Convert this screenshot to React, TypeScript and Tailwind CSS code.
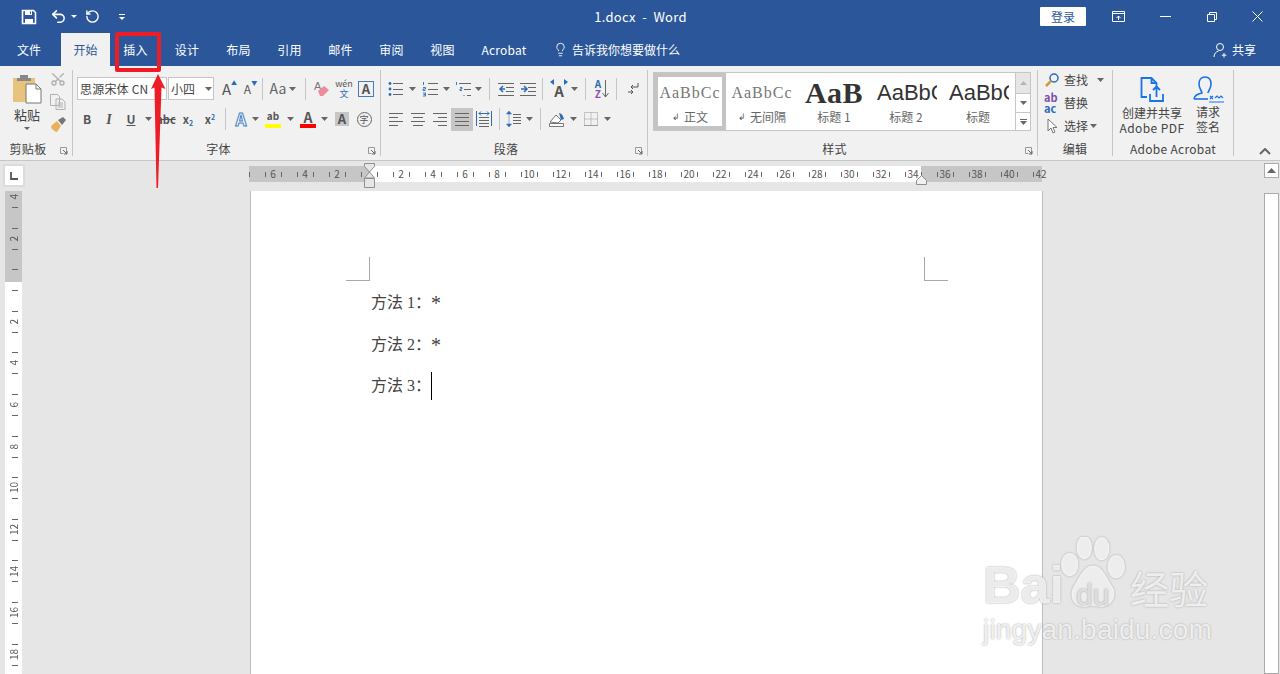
import { type ReactNode } from "react";
import { Lightbulb, RotateCcw, Scissors, Undo2 } from "lucide-react";

const UI_FONT = "font-['Noto_Sans_CJK_SC','Liberation_Sans',sans-serif]";

const TABS = [
  { label: "插入", width: "w-[51px]" },
  { label: "设计", width: "w-[52px]" },
  { label: "布局", width: "w-[51px]" },
  { label: "引用", width: "w-[51px]" },
  { label: "邮件", width: "w-[51px]" },
  { label: "审阅", width: "w-[51px]" },
  { label: "视图", width: "w-[51px]" },
  { label: "Acrobat", width: "w-[72px]" },
];

const H_LABELS = ["6", "4", "2", "", "2", "4", "6", "8", "10", "12", "14", "16", "18", "20", "22", "24", "26", "28", "30", "32", "34", "36", "38", "40", "42"];
const V_LABELS = ["4", "2", "", "2", "4", "6", "8", "10", "12", "14", "16", "18"];

function Icon({ size = 16, box = 16, children, className = "" }: { size?: number; box?: number; children: ReactNode; className?: string }) {
  return (
    <svg width={size} height={size} viewBox={`0 0 ${box} ${box}`} fill="none" className={className}>
      {children}
    </svg>
  );
}

function Caret({ className = "w-[10px]" }: { className?: string }) {
  return (
    <span className={`flex h-[22px] items-center justify-center ${className}`}>
      <svg width="7" height="4" viewBox="0 0 7 4">
        <path d="M0 0h7L3.5 4z" fill="#666" />
      </svg>
    </span>
  );
}

function Sep({ className = "" }: { className?: string }) {
  return <span className={`h-[22px] w-px bg-[#c6c6c6] ${className}`} />;
}

function Btn({ children, className = "w-[22px]" }: { children: ReactNode; className?: string }) {
  return <span className={`flex h-[22px] items-center justify-center ${className}`}>{children}</span>;
}

function RibbonGroup({ label, className, launcher = true, children }: { label: string; className: string; launcher?: boolean; children: ReactNode }) {
  return (
    <section className={`relative my-[4px] flex h-[86px] flex-col border-r border-[#c6c6c6] ${className}`}>
      <div className="h-[72px] min-h-0">{children}</div>
      <div className={`flex h-[14px] items-center justify-center text-[12px] leading-none tracking-[0.3px] text-[#444] ${launcher ? "pr-[16px]" : ""}`}>{label}</div>
      {launcher ? (
        <svg width="8" height="8" viewBox="0 0 8 8" className="absolute right-[4px] bottom-[1px]">
          <path d="M.5 .5h6v6" fill="none" stroke="#999" />
          <path d="M.5 .5v6h3" fill="none" stroke="#999" />
          <path d="M3 3l4 4M7 4v3H4" fill="none" stroke="#666" />
        </svg>
      ) : null}
    </section>
  );
}

function Lines({ x = 0, ys, w = 13, color = "#666" }: { x?: number; ys: number[]; w?: number; color?: string }) {
  return (
    <>
      {ys.map((y) => (
        <path key={y} d={`M${x} ${y}.5h${w}`} stroke={color} />
      ))}
    </>
  );
}

function Bullets() {
  return (
    <Icon>
      <circle cx="2" cy="2.5" r="1.4" fill="#2b6cb5" />
      <circle cx="2" cy="8" r="1.4" fill="#2b6cb5" />
      <circle cx="2" cy="13.5" r="1.4" fill="#2b6cb5" />
      <Lines x={5} ys={[2, 8, 13]} w={10} />
    </Icon>
  );
}

function Numbered() {
  return (
    <Icon>
      <path d="M1.5 1v3M1 6.5h2.5v1.5H1v1.500h2.5M1 12h2.5v3H1M1.500 13.500h2" stroke="#2b6cb5" strokeWidth=".9" />
      <Lines x={6} ys={[2, 8, 13]} w={10} />
    </Icon>
  );
}

function Multilevel() {
  return (
    <Icon>
      <path d="M1.5 1v3M5 6.5h2v1.5H5v1.500h2" stroke="#2b6cb5" strokeWidth=".9" />
      <path d="M9 14v1" stroke="#2b6cb5" />
      <Lines x={4} ys={[2]} w={12} />
      <Lines x={9} ys={[8]} w={7} />
      <Lines x={12} ys={[14]} w={4} />
    </Icon>
  );
}

function Indent({ flip = false }: { flip?: boolean }) {
  return (
    <Icon>
      <Lines x={0} ys={[2, 14]} w={16} />
      <Lines x={8} ys={[6, 10]} w={8} />
      <path d={flip ? "M1 8h5M4 5l3 3-3 3" : "M7 8H2M5 5L2 8l3 3"} stroke="#2b6cb5" strokeWidth="1.5" />
    </Icon>
  );
}

function Align({ kind }: { kind: "left" | "center" | "right" | "justify" }) {
  const rows = {
    left: [[1, 14], [1, 9], [1, 14], [1, 9]],
    center: [[1, 14], [3, 10], [1, 14], [3, 10]],
    right: [[1, 14], [6, 9], [1, 14], [6, 9]],
    justify: [[1, 14], [1, 14], [1, 14], [1, 14]],
  }[kind];
  return (
    <Icon>
      {rows.map(([x, w], i) => (
        <path key={i} d={`M${x} ${2 + i * 4}.5h${w}`} stroke="#666" />
      ))}
    </Icon>
  );
}

function GalleryItem({ sample, label, mark = false, selected = false, left = false }: { sample: ReactNode; label: string; mark?: boolean; selected?: boolean; left?: boolean }) {
  return (
    <div className={`flex h-[57px] w-[72px] flex-col items-center overflow-hidden ${selected ? "border-4 border-[#c4c4c4]" : "border-4 border-white"}`}>
      <div className={`flex h-[32px] w-[62px] items-center overflow-hidden whitespace-nowrap ${left ? "justify-start pl-[2px]" : "justify-center"}`}>{sample}</div>
      <div className="flex items-center text-[12px] leading-[16px] text-[#666]">
        {mark ? <span className="mr-[4px] text-[9px] text-[#555]">↲</span> : null}
        {label}
      </div>
    </div>
  );
}

function TitleBar() {
  return (
    <header className="flex h-[33px] items-center bg-[#2b579a] text-white">
      <div className="ml-[21px] flex w-[110px] items-center">
        <Icon>
          <path d="M1.5 1.5h11l2 2v11h-13z" stroke="#fff" strokeWidth="1.6" />
          <path d="M4 2h7v4H4z" fill="#fff" />
          <path d="M4 10h8v5H4z" fill="#fff" />
          <path d="M9 2.500h1v2.500H9z" fill="#2b579a" />
        </Icon>
        <Undo2 size={17} strokeWidth={2.2} className="ml-[13px]" />
        <svg width="6" height="3" viewBox="0 0 6 3" className="ml-[4px]">
          <path d="M0 0h6L3 3z" fill="#fff" />
        </svg>
        <RotateCcw size={15} strokeWidth={2.2} className="ml-[8px]" />
        <svg width="6" height="6" viewBox="0 0 6 6" className="ml-[19px]">
          <path d="M0 .5h6" stroke="#fff" />
          <path d="M0 3h6L3 6z" fill="#fff" />
        </svg>
      </div>
      <div className="flex-1 pl-[110px] text-center text-[13px] tracking-[0.3px]">1.docx&nbsp; -&nbsp; Word</div>
      <div className="flex h-[19px] w-[46px] items-center justify-center rounded-[1px] bg-white text-[12px] text-[#2b579a]">登录</div>
      <div className="mr-[17px] ml-[26px] flex w-[151px] items-center justify-between">
        <svg width="13" height="11" viewBox="0 0 13 11">
          <path d="M.5 .5h12v10H.5zM.5 2.500h12M6.500 9V5M4.500 7l2-2 2 2" fill="none" stroke="#fff" />
        </svg>
        <svg width="11" height="1" viewBox="0 0 11 1">
          <path d="M0 .5h11" stroke="#fff" />
        </svg>
        <svg width="10" height="10" viewBox="0 0 10 10">
          <path d="M.5 2.500h7v7h-7zM2.500 2.500v-2h7v7h-2" fill="none" stroke="#fff" />
        </svg>
        <svg width="11" height="11" viewBox="0 0 11 11">
          <path d="M.5 .5l10 10M10.500 .5l-10 10" stroke="#fff" />
        </svg>
      </div>
    </header>
  );
}

function TabBar() {
  return (
    <nav className="flex h-[33px] items-stretch bg-[#2b579a] text-[12px] text-white">
      <div className="flex w-[58px] items-center justify-center">文件</div>
      <div className="ml-[3px] flex w-[49px] items-center justify-center bg-[#f1f1f1] text-[#2b579a]">开始</div>
      {TABS.map((tab) => (
        <div key={tab.label} className={`flex items-center justify-center tracking-[0.2px] ${tab.width}`}>
          {tab.label}
        </div>
      ))}
      <div className="ml-[13px] flex items-center">
        <Lightbulb size={15} strokeWidth={1.4} />
        <span className="ml-[4px]">告诉我你想要做什么</span>
      </div>
      <div className="ml-auto mr-[24px] flex items-center">
        <svg width="16" height="16" viewBox="0 0 16 16" fill="none">
          <circle cx="7" cy="5" r="3.500" stroke="#fff" />
          <path d="M1 15c0-3 2-5.500 4.500-6M11 11v4.500M8.800 13.200h4.500" stroke="#fff" />
        </svg>
        <span className="ml-[3px]">共享</span>
      </div>
    </nav>
  );
}

function Clipboard() {
  return (
    <RibbonGroup label="剪贴板" className="w-[73px]">
      <div className="flex h-[70px]">
        <div className="flex w-[54px] flex-col items-center pt-[4px]">
          <svg width="30" height="30" viewBox="0 0 30 30">
            <path d="M1 4h22v24H1z" fill="#e8c37c" />
            <path d="M8 1h8v3h3v3H5V4h3z" fill="#888" />
            <path d="M14 10h10l5 5v14H14z" fill="#fff" stroke="#777" />
            <path d="M24 10v5h5" fill="none" stroke="#777" />
          </svg>
          <span className="text-[13px] leading-[21px] text-[#444]">粘贴</span>
          <svg width="6" height="3" viewBox="0 0 6 3" className="mt-[2px]">
            <path d="M0 0h6L3 3z" fill="#666" />
          </svg>
        </div>
        <div className="-ml-[4px] flex w-[16px] flex-col items-center gap-[7px] pt-px">
          <Scissors size={16} color="#b0b0b0" className="-rotate-90" />
          <svg width="16" height="16" viewBox="0 0 16 16" fill="none" stroke="#b0b0b0">
            <path d="M.5 .5h7l2 2v9h-9zM6 5h6l3 3v7.500H6z" />
            <path d="M8 9h5M8 11h5M8 13h5" />
          </svg>
          <svg width="16" height="16" viewBox="0 0 16 16">
            <path d="M1 9l6-5 4 5-4 6-3-1-1-2-1 1z" fill="#e8b25c" />
            <path d="M8 3l5-3 3 3-4 5z" fill="#777" />
          </svg>
        </div>
      </div>
    </RibbonGroup>
  );
}

function FontGroup() {
  return (
    <RibbonGroup label="字体" className="w-[308px]">
      <div className="mt-[7px] flex h-[23px] items-center pl-[4px]">
        <div className="flex h-[23px] w-[90px] items-center border border-[#c6c6c6] bg-white pl-[2px] text-[12px] tracking-[0.2px] whitespace-nowrap text-[#444]">思源宋体 CN</div>
        <div className="ml-[1px] flex h-[23px] w-[46px] items-center justify-between border border-[#c6c6c6] bg-white pl-[2px] text-[12px] text-[#444]">
          小四
          <Caret />
        </div>
        <Btn className="ml-[2px] w-[21px]">
          <span className="relative text-[15px] leading-none text-[#555]">A<span className="absolute -top-[1px] -right-[6px] text-[6px] text-[#2b6cb5]">▲</span></span>
        </Btn>
        <Btn className="w-[21px]">
          <span className="relative text-[12px] leading-none text-[#555]">A<span className="absolute -top-[3px] -right-[6px] text-[6px] text-[#2b6cb5]">▼</span></span>
        </Btn>
        <Sep className="ml-[4px]" />
        <Btn className="ml-[6px] w-[18px]">
          <span className="text-[14px] text-[#666]">Aa</span>
        </Btn>
        <Caret />
        <Sep className="ml-[8px]" />
        <Btn className="ml-[5px] w-[22px]">
          <svg width="16" height="16" viewBox="0 0 16 16">
            <text x="0" y="9" fontSize="11" fill="#777" fontFamily="Liberation Sans">A</text>
            <path d="M4 10l6-5 5 4-6 6H6z" fill="#ee8b99" />
          </svg>
        </Btn>
        <Btn>
          <span className="flex flex-col items-center text-[9px] leading-[10px] text-[#555]">
            wén
            <span className="text-[#2b6cb5]">文</span>
          </span>
        </Btn>
        <Btn>
          <span className="flex h-[16px] w-[16px] items-center justify-center border border-[#4a79b5] text-[13px] font-bold leading-none text-[#555]">A</span>
        </Btn>
      </div>
      <div className="mt-[7px] flex h-[24px] items-center pl-[3px] text-[#555]">
        <Btn><b className="text-[12px]">B</b></Btn>
        <Btn><i className="font-['Liberation_Serif',serif] text-[14px] font-bold">I</i></Btn>
        <Btn><b className="text-[12px] underline">U</b></Btn>
        <Caret className="ml-px w-[10px]" />
        <Btn className="ml-[2px] w-[22px]"><span className="text-[11px] font-bold line-through">abc</span></Btn>
        <Btn><b className="text-[11px]">x<sub className="text-[7px] text-[#2b6cb5]">2</sub></b></Btn>
        <Btn><b className="text-[11px]">x<sup className="text-[7px] text-[#2b6cb5]">2</sup></b></Btn>
        <Sep className="ml-[4px]" />
        <Btn className="ml-[4px] w-[22px]"><b className="text-[17px] text-white [-webkit-text-stroke:1px_#3f7fc4]">A</b></Btn>
        <Caret className="-ml-[2px] w-[10px]" />
        <Btn className="ml-[2px] w-[22px]">
          <span className="relative flex h-[18px] w-[16px] flex-col items-center text-[10px] leading-[12px] font-bold">
            ab
            <span className="absolute bottom-0 h-[4px] w-[16px] bg-[#ffff00]" />
          </span>
        </Btn>
        <Caret className="ml-px w-[10px]" />
        <Btn className="ml-[2px] w-[22px]">
          <span className="relative flex h-[18px] w-[16px] justify-center text-[14px] leading-[14px] font-bold">
            A
            <span className="absolute bottom-0 h-[4px] w-[16px] bg-[#ff0000]" />
          </span>
        </Btn>
        <Caret />
        <Btn className="ml-[2px] w-[22px]">
          <span className="flex h-[14px] w-[14px] items-center justify-center bg-[#c6c6c6] text-[13px] font-bold">A</span>
        </Btn>
        <Btn>
          <span className="flex h-[15px] w-[15px] items-center justify-center rounded-full border border-[#666] text-[9px] leading-none">字</span>
        </Btn>
      </div>
    </RibbonGroup>
  );
}

function ParagraphGroup() {
  return (
    <RibbonGroup label="段落" className="w-[267px]">
      <div className="mt-[7px] flex h-[23px] items-center pl-[7px]">
        <Btn className="w-[16px]"><Bullets /></Btn>
        <Caret className="w-[16px]" />
        <Btn className="w-[20px]"><Numbered /></Btn>
        <Caret className="w-[12px]" />
        <Btn className="ml-[3px] w-[16px]"><Multilevel /></Btn>
        <Caret className="w-[14px]" />
        <Sep className="ml-[4px]" />
        <Btn className="ml-[8px] w-[16px]"><Indent /></Btn>
        <Btn className="ml-[6px] w-[16px]"><Indent flip /></Btn>
        <Sep className="ml-[6px]" />
        <Btn className="ml-[6px] w-[20px]">
          <span className="relative mt-[3px] text-[15px] font-bold leading-none text-[#555]">
            A
            <svg width="18" height="6" viewBox="0 0 18 6" className="absolute -top-[4px] -left-[4px]">
              <path d="M0 3L4 0v6zM18 3L14 0v6z" fill="#2b6cb5" />
            </svg>
          </span>
        </Btn>
        <Caret className="w-[10px]" />
        <Sep className="ml-[6px]" />
        <Btn className="ml-[7px] w-[18px]">
          <span className="flex flex-col text-[10px] leading-[10px] font-bold">
            <span className="text-[#2b6cb5]">A</span>
            <span className="text-[#8a4fb5]">Z</span>
          </span>
          <svg width="7" height="18" viewBox="0 0 7 18" className="ml-[1px]">
            <path d="M3.500 0v17M.5 13l3 4 3-4" fill="none" stroke="#666" />
          </svg>
        </Btn>
        <Sep className="ml-[5px]" />
        <Btn className="ml-[5px] w-[22px]">
          <svg width="11" height="13" viewBox="0 0 11 13" fill="none">
            <path d="M10 1v4H3M5 3L3 5l2 2" stroke="#555" />
            <path d="M0 10h5M3 8l2 2-2 2" stroke="#555" />
          </svg>
        </Btn>
      </div>
      <div className="mt-[7px] flex h-[24px] items-center pl-[4px]">
        <Btn className="w-[22px]"><Align kind="left" /></Btn>
        <Btn className="w-[22px]"><Align kind="center" /></Btn>
        <Btn className="w-[22px]"><Align kind="right" /></Btn>
        <span className="flex h-[23px] w-[22px] items-center justify-center bg-[#c6c6c6]"><Align kind="justify" /></span>
        <Btn className="w-[22px]">
          <Icon>
            <path d="M.5 0v15M15.500 0v15" stroke="#2b6cb5" />
            <path d="M3 2.500h10M5 .5l-2 2 2 2M11 .5l2 2-2 2" stroke="#2b6cb5" />
            <Lines x={3} ys={[6, 9, 12, 15]} w={10} />
          </Icon>
        </Btn>
        <Sep className="ml-[4px]" />
        <Btn className="ml-[4px] w-[20px]">
          <Icon>
            <path d="M3 0l-2.500 3h5zM3 16l-2.500-3h5zM3 3v10" stroke="#2b6cb5" fill="#2b6cb5" strokeWidth=".5" />
            <Lines x={7} ys={[3, 6, 9, 12]} w={8} />
          </Icon>
        </Btn>
        <Caret className="w-[10px]" />
        <Sep className="ml-[6px]" />
        <Btn className="ml-[5px] w-[22px]">
          <Icon>
            <path d="M1 11l6-7 5 5-3 3z" fill="#fff" stroke="#777" />
            <path d="M10 2c2 0 4 2 5 6l-3 1z" fill="#2b6cb5" />
            <path d="M.5 12.500h14v3H.5z" fill="#fff" stroke="#777" />
          </Icon>
        </Btn>
        <Caret className="w-[10px]" />
        <Btn className="ml-[2px] w-[22px]">
          <svg width="14" height="14" viewBox="0 0 14 14" fill="none">
            <path d="M.5 .5h13v13H.5zM7 .5v13M.5 7h13" stroke="#999" strokeDasharray="1 1" />
            <path d="M.5 13.500h13" stroke="#777" strokeDasharray="1 1" />
          </svg>
        </Btn>
        <Caret className="w-[10px]" />
      </div>
    </RibbonGroup>
  );
}

function StylesGroup() {
  const serif = "font-['Liberation_Serif',serif] text-[16px] tracking-[1px] text-[#777]";
  const sans = "font-['Liberation_Sans',sans-serif] text-[22px] leading-none text-[#333]";
  return (
    <RibbonGroup label="样式" className="w-[390px]">
      <div className="ml-[5px] mt-[2px] flex h-[59px]">
        <div className="flex w-[363px] overflow-hidden border border-[#c6c6c6] bg-white">
          <GalleryItem selected mark label="正文" sample={<span className={serif}>AaBbCc</span>} />
          <GalleryItem mark label="无间隔" sample={<span className={serif}>AaBbCc</span>} />
          <GalleryItem label="标题 1" sample={<span className="font-['Liberation_Serif',serif] text-[30px] leading-none font-bold tracking-[0.5px] text-[#333]">AaB</span>} />
          <GalleryItem left label="标题 2" sample={<span className={sans}>AaBbC</span>} />
          <GalleryItem left label="标题" sample={<span className={sans}>AaBbC</span>} />
        </div>
        <div className="flex w-[15px] flex-col border-y border-r border-[#c6c6c6] bg-white">
          <div className="flex h-[21px] items-center justify-center border-b border-[#c6c6c6] bg-[#e6e6e6]">
            <svg width="7" height="4" viewBox="0 0 7 4"><path d="M3.500 0L7 4H0z" fill="#b5b5b5" /></svg>
          </div>
          <div className="flex h-[19px] items-center justify-center border-b border-[#c6c6c6]">
            <svg width="7" height="4" viewBox="0 0 7 4"><path d="M0 0h7L3.500 4z" fill="#666" /></svg>
          </div>
          <div className="flex flex-1 items-center justify-center">
            <svg width="7" height="6" viewBox="0 0 7 6"><path d="M0 .5h7" stroke="#666" /><path d="M0 2h7L3.500 6z" fill="#666" /></svg>
          </div>
        </div>
      </div>
    </RibbonGroup>
  );
}

function EditGroup() {
  return (
    <RibbonGroup label="编辑" className="w-[75px]" launcher={false}>
      <div className="-mt-[2px] flex flex-col pl-[6px] text-[12px] text-[#444]">
        <div className="flex h-[23px] items-center">
          <svg width="16" height="16" viewBox="0 0 16 16" fill="none">
            <circle cx="10" cy="6" r="4" stroke="#2b6cb5" strokeWidth="1.500" />
            <path d="M7 9l-5 5" stroke="#d39a3a" strokeWidth="2.500" />
          </svg>
          <span className="ml-[4px]">查找</span>
          <Caret className="ml-[7px] w-[10px]" />
        </div>
        <div className="flex h-[23px] items-center">
          <span className="flex w-[16px] flex-col text-[11px] leading-[11px] font-bold">
            <span className="text-[#7a4fa5]">ab</span>
            <span className="text-[#2b6cb5]">ac</span>
          </span>
          <span className="ml-[4px]">替换</span>
        </div>
        <div className="flex h-[23px] items-center">
          <svg width="16" height="16" viewBox="0 0 16 16" fill="#fff" stroke="#777">
            <path d="M4 1v12l3-3 2 5 2-1-2-4.500h4z" />
          </svg>
          <span className="ml-[4px]">选择</span>
          <Caret className="w-[10px]" />
        </div>
      </div>
    </RibbonGroup>
  );
}

function AcrobatGroup() {
  return (
    <RibbonGroup label="Adobe Acrobat" className="w-[121px]" launcher={false}>
      <div className="flex text-center text-[12px] leading-[15px] text-[#444]">
        <div className="flex w-[78px] flex-col items-center pt-[7px]">
          <svg width="24" height="26" viewBox="0 0 24 26" fill="none" stroke="#1a73e8" strokeWidth="1.800">
            <path d="M7 20H1.500V1h10l5 5v4M11.500 1v5h5" />
            <path d="M10 17v7h13v-7M16.500 20v-10M13 13l3.500-3.500L20 13" />
          </svg>
          <span className="mt-[2px] whitespace-nowrap">创建并共享</span>
          <span className="whitespace-nowrap tracking-[0.4px]">Adobe PDF</span>
        </div>
        <div className="flex w-[34px] flex-col items-center pt-[5px]">
          <svg width="32" height="28" viewBox="0 0 32 28" fill="none" stroke="#1a73e8" strokeWidth="1.600">
            <path d="M2 24c0-4 4-5 8-6 0-2-3-4-3-9 0-4 2-7 6-7s6 3 6 7c0 5-3 7-3 9" />
            <path d="M2 24h14" />
            <path d="M18 21l3 3M21 21l-3 3M23 23l2-2 2 2 2-2 2 2M17 27h15" strokeWidth="1.200" />
          </svg>
          <span className="mt-px whitespace-nowrap">请求</span>
          <span className="whitespace-nowrap">签名</span>
        </div>
      </div>
    </RibbonGroup>
  );
}

function Ribbon() {
  return (
    <div className="relative flex h-[95px] border-b border-[#c6c6c6] bg-[#f1f1f1]">
      <Clipboard />
      <FontGroup />
      <ParagraphGroup />
      <StylesGroup />
      <EditGroup />
      <AcrobatGroup />
      <div className="ml-auto mr-[9px] self-end pb-[5px]">
        <svg width="12" height="7" viewBox="0 0 12 7" fill="none">
          <path d="M1 6l5-5 5 5" stroke="#666" strokeWidth="2" />
        </svg>
      </div>
    </div>
  );
}

function HorizontalRuler() {
  return (
    <div className="relative ml-[224px] mt-[2px] flex h-[16px] w-[805px] items-center bg-[linear-gradient(to_right,#c6c6c6_121px,#fff_121px,#fff_672px,#c6c6c6_672px,#c6c6c6_793px,transparent_793px)] text-[10px] leading-none text-[#555]">
      <span className="h-[5px] w-px shrink-0 bg-[#666]" />
      <span className="w-[7px] shrink-0" />
      {H_LABELS.map((label, i) => (
        <span key={i} className="relative flex w-[32px] shrink-0 items-center justify-center">
          <span className="absolute left-[8px] h-[5px] w-px bg-[#666]" />
          {label}
          {i < H_LABELS.length - 1 ? <span className="absolute left-[24px] h-[5px] w-px bg-[#666]" /> : null}
        </span>
      ))}
      <svg width="12" height="27" viewBox="0 0 12 27" className="absolute -top-[3px] left-[115px]">
        <path d="M.5 .5h10v3L5.500 9 .5 3.500zM5.500 9l5 6H.5zM.5 15.500h10v9H.5z" fill="#e6e6e6" stroke="#8f8f8f" />
      </svg>
      <svg width="12" height="10" viewBox="0 0 12 10" className="absolute top-[9px] left-[667px]">
        <path d="M5.500 .5l5 5v4H.5v-4z" fill="#f1f1f1" stroke="#8f8f8f" />
      </svg>
    </div>
  );
}

function VerticalRuler() {
  return (
    <div className="ml-[5px] flex w-[17px] shrink-0 flex-col overflow-hidden bg-[linear-gradient(to_bottom,#c6c6c6_91px,#fff_91px)] text-[10px] leading-none text-[#555]">
      <div className="-mt-[15px]">
        {V_LABELS.map((label, i) => (
          <div key={i} className="relative flex h-[41.6px] items-center justify-center">
            <span className="absolute top-[10px] left-[7px] h-px w-[6px] bg-[#666]" />
            <span className="rotate-180 [writing-mode:vertical-rl]">{label}</span>
            <span className="absolute top-[31px] left-[7px] h-px w-[6px] bg-[#666]" />
          </div>
        ))}
      </div>
    </div>
  );
}

function Page() {
  const lines = ["方法 1：", "方法 2：", "方法 3："];
  return (
    <div className="ml-[228px] w-[793px] shrink-0 border-x border-[#bdbdbd] bg-white pt-[66px]">
      <div className="flex justify-between pr-[94px] pl-[95px]">
        <span className="h-[24px] w-[24px] border-r border-b border-[#a8a8a8]" />
        <span className="h-[24px] w-[24px] border-b border-l border-[#a8a8a8]" />
      </div>
      <div className="mt-px pl-[120px] font-['Liberation_Serif','Noto_Sans_CJK_SC',serif] text-[16px] text-[#444]">
        {lines.map((line, i) => (
          <div key={line} className="flex h-[41.7px] items-center">
            {line}
            {i < 2 ? <span className="text-[20px] leading-none">*</span> : <span className="h-[28px] w-px bg-black" />}
          </div>
        ))}
      </div>
    </div>
  );
}

function Watermark() {
  return (
    <div className="pointer-events-none absolute top-[537px] left-[983px] h-[110px] w-[230px] font-['Liberation_Sans',sans-serif] text-white/80 [text-shadow:0_0_2px_#9a9a9a]">
      <div className="absolute top-[22px] left-0 text-[52px] leading-[52px] font-bold">Bai</div>
      <svg width="66" height="72" viewBox="0 0 68 68" preserveAspectRatio="none" className="absolute top-0 left-[77px] drop-shadow-[0_0_1px_#9a9a9a]">
        <ellipse cx="10" cy="26" rx="9" ry="11" fill="#fff" fillOpacity=".8" />
        <ellipse cx="25" cy="10" rx="8" ry="11" fill="#fff" fillOpacity=".8" />
        <ellipse cx="43" cy="11" rx="8" ry="11" fill="#fff" fillOpacity=".8" />
        <ellipse cx="58" cy="28" rx="9" ry="11" fill="#fff" fillOpacity=".8" />
        <path d="M34 27c10 0 14 12 20 20 5 7 1 19-12 19-3 0-5-1-8-1s-6 1-9 1c-12 0-16-11-11-19 5-7 10-20 20-20z" fill="#fff" fillOpacity=".8" />
      </svg>
      <div className="absolute top-[46px] left-[93px] text-[30px] leading-[24px] text-[#e6e6e6]/90">du</div>
      <div className="absolute top-[28px] left-[147px] font-['Noto_Sans_CJK_SC',sans-serif] text-[39px] leading-[44px]">经验</div>
      <div className="absolute top-[79px] left-0 text-[28px] leading-[28px] tracking-[0.2px]">jingyan.baidu.com</div>
    </div>
  );
}

function Annotation() {
  return (
    <>
      <div className="absolute top-[32px] left-[115px] h-[40px] w-[46px] rounded-[2px] border-4 border-[#ee1c25]" />
      <svg width="16" height="116" viewBox="0 0 16 116" className="absolute top-[73px] left-[150px]">
        <path d="M8 1l7.500 15-4-1.500L8 115h-1.500L4.500 14.500 1 16z" fill="#ee1c25" />
      </svg>
    </>
  );
}

export default function App() {
  return (
    <div className={`relative h-screen w-full overflow-hidden bg-[#e6e6e6] ${UI_FONT}`}>
      <TitleBar />
      <TabBar />
      <Ribbon />
      <div className="flex h-[513px]">
        <div className="flex w-[1264px] flex-col">
          <div className="flex h-[30px] items-start pl-[3px] pt-[3px]">
            <div className="flex h-[23px] w-[22px] items-center justify-center border-2 border-[#dcdcdc] bg-white">
              <svg width="8" height="8" viewBox="0 0 8 8">
                <path d="M1 0v7h7" fill="none" stroke="#555" strokeWidth="1.800" />
              </svg>
            </div>
            <HorizontalRuler />
          </div>
          <div className="flex min-h-0 flex-1">
            <VerticalRuler />
            <Page />
          </div>
        </div>
        <div className="flex w-[15px] flex-col pt-[2px]">
          <div className="flex h-[15px] items-center justify-center border border-[#ababab] bg-white">
            <svg width="9" height="5" viewBox="0 0 9 5"><path d="M4.500 0L9 5H0z" fill="#666" /></svg>
          </div>
          <div className="mt-[15px] flex-1 border border-[#ababab] bg-white" />
        </div>
      </div>
      <Watermark />
      <Annotation />
    </div>
  );
}
